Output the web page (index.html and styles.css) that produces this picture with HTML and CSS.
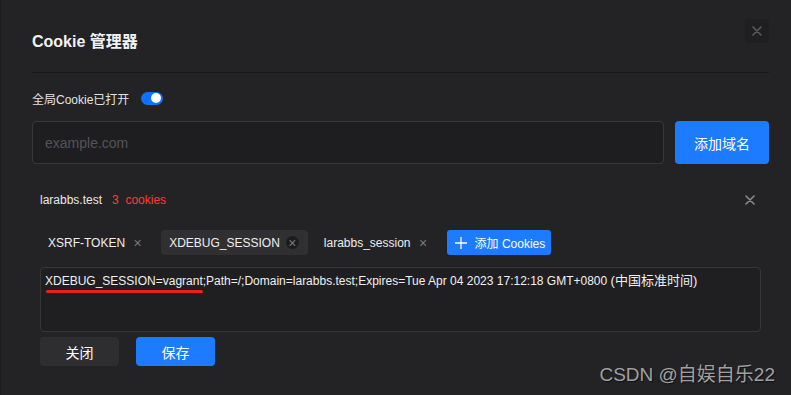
FILE: index.html
```html
<!DOCTYPE html>
<html lang="zh-CN">
<head>
    <meta charset="UTF-8">
    <meta name="viewport" content="width=device-width, initial-scale=1.0">
    <title>Cookie 管理器</title>
    <link rel="stylesheet" href="styles.css">
</head>
<body>
    <div class="dialog">
        <div class="header">
            <h2 class="title">Cookie 管理器</h2>
            <button class="close-btn" aria-label="close">
                <svg width="10" height="10" viewBox="0 0 10 10"><path d="M1 1L9 9M9 1L1 9" stroke="#5a5a5d" stroke-width="1.6" stroke-linecap="round"/></svg>
            </button>
        </div>

        <div class="global-row">
            <span>全局Cookie已打开</span>
            <span class="switch on"><span class="knob"></span></span>
        </div>

        <div class="domain-input">
            <input type="text" placeholder="example.com">
            <button class="btn primary add-domain">添加域名</button>
        </div>

        <div class="domain">
            <div class="domain-head">
                <span class="domain-name">larabbs.test</span>
                <span class="count">3&nbsp; cookies</span>
                <span class="domain-close">
                    <svg width="10" height="10" viewBox="0 0 10 10"><path d="M1 1L9 9M9 1L1 9" stroke="#8a8a8d" stroke-width="1.6" stroke-linecap="round"/></svg>
                </span>
            </div>

            <div class="tabs">
                <div class="tab">XSRF-TOKEN <span class="tab-x">×</span></div>
                <div class="tab active">XDEBUG_SESSION <span class="tab-x">×</span></div>
                <div class="tab">larabbs_session <span class="tab-x">×</span></div>
                <button class="btn primary add-cookie">
                    <svg width="12" height="12" viewBox="0 0 12 12"><path d="M6 0V12M0 6H12" stroke="#fff" stroke-width="1.3"/></svg>
                    添加 Cookies
                </button>
            </div>

            <div class="cookie-text">
                <span class="marked">XDEBUG_SESSION=vagrant</span>;Path=/;Domain=larabbs.test;Expires=Tue Apr 04 2023 17:12:18 GMT+0800 <span class="zone">(中国标准时间)</span>
            </div>

            <div class="actions">
                <button class="btn dark">关闭</button>
                <button class="btn primary">保存</button>
            </div>
        </div>

        <div class="watermark">CSDN @自娱自乐22</div>
    </div>
</body>
</html>
```

FILE: styles.css
```css
* {
    box-sizing: border-box;
}
body {
    margin: 0;
    background-color: #232325;
    color: #e8e8ea;
    font-family: "Liberation Sans", "Noto Sans CJK SC", sans-serif;
    font-size: 12px;
}
.dialog {
    position: relative;
    height: 395px;
    padding: 19px 22px 0 31px;
    border-left: 1px solid #1c1c1e;
}
.header {
    display: flex;
    justify-content: space-between;
    align-items: flex-start;
    height: 54px;
    border-bottom: 1px solid #18181a;
}
.title {
    margin: 13px 0 0 0;
    font-size: 16px;
    line-height: 20px;
    font-weight: bold;
    color: #f2f2f4;
}
.close-btn {
    width: 24px;
    height: 24px;
    border: none;
    border-radius: 4px;
    background-color: #1f1f21;
    display: flex;
    align-items: center;
    justify-content: center;
    padding: 0;
}
.global-row {
    display: flex;
    align-items: center;
    height: 20px;
    margin-top: 15px;
    color: #e2e2e4;
}
.switch {
    width: 22px;
    height: 13px;
    border-radius: 7px;
    background-color: #1070ff;
    margin-left: 12px;
    position: relative;
}
.switch .knob {
    position: absolute;
    top: 1.5px;
    right: 2px;
    width: 10px;
    height: 10px;
    border-radius: 50%;
    background: #fff;
}
.domain-input {
    display: flex;
    gap: 11px;
    margin-top: 13px;
    height: 43px;
}
.domain-input input {
    flex: 1;
    height: 43px;
    background-color: #1e1e20;
    border: 1px solid #38383b;
    border-radius: 4px;
    padding: 0 12px;
    color: #ddd;
    font-family: inherit;
    font-size: 14px;
    outline: none;
}
.domain-input input::placeholder {
    color: #545457;
}
.btn {
    border: none;
    border-radius: 4px;
    color: #fff;
    font-family: inherit;
    cursor: pointer;
}
.btn.primary {
    background-color: #1d7bff;
}
.btn.dark {
    background-color: #2e2e31;
}
.add-domain {
    width: 94px;
    height: 43px;
    font-size: 14px;
}
.domain {
    padding: 0 8px;
}
.domain-head {
    display: flex;
    align-items: center;
    height: 20px;
    margin-top: 26px;
}
.domain-name {
    color: #e8e8ea;
}
.count {
    color: #ff3a3a;
    margin-left: 10px;
    flex: 1;
}
.domain-close {
    display: flex;
    margin-right: 6px;
}
.tabs {
    display: flex;
    align-items: center;
    gap: 8px;
    margin-top: 20px;
    height: 25px;
}
.tab {
    display: flex;
    align-items: center;
    height: 25px;
    padding: 0 9px 0 8px;
    border-radius: 4px;
    color: #eeeef0;
}
.tab.active {
    background-color: #303033;
}
.tab-x {
    display: inline-flex;
    align-items: center;
    justify-content: center;
    width: 13px;
    height: 13px;
    margin-left: 6px;
    border-radius: 50%;
    color: #7a7a7d;
    font-size: 14px;
    line-height: 1;
}
.tab.active .tab-x {
    background-color: #1c1c1e;
}
.add-cookie {
    display: flex;
    align-items: center;
    gap: 8px;
    height: 25px;
    padding: 0 6px 0 8px;
    font-size: 12px;
    border-radius: 3px;
}
.cookie-text {
    margin-top: 12px;
    height: 65px;
    border: 1px solid #363639;
    border-radius: 4px;
    background-color: #1f1f21;
    padding: 4px 4px;
    line-height: 17px;
    color: #f0f0f2;
}
.zone {
    font-size: 13px;
}
.marked {
    position: relative;
}
.marked::after {
    content: "";
    position: absolute;
    left: 1px;
    right: 0;
    bottom: -5px;
    height: 3px;
    border-radius: 2px;
    background-color: #f01d1d;
}
.actions {
    display: flex;
    gap: 17px;
    margin-top: 5px;
}
.actions .btn {
    width: 79px;
    height: 29px;
    font-size: 14px;
}
.watermark {
    position: absolute;
    right: 16px;
    bottom: 9px;
    font-size: 19px;
    color: #a0a0a2;
    text-shadow: 1px 1px 1px #111;
}
```
